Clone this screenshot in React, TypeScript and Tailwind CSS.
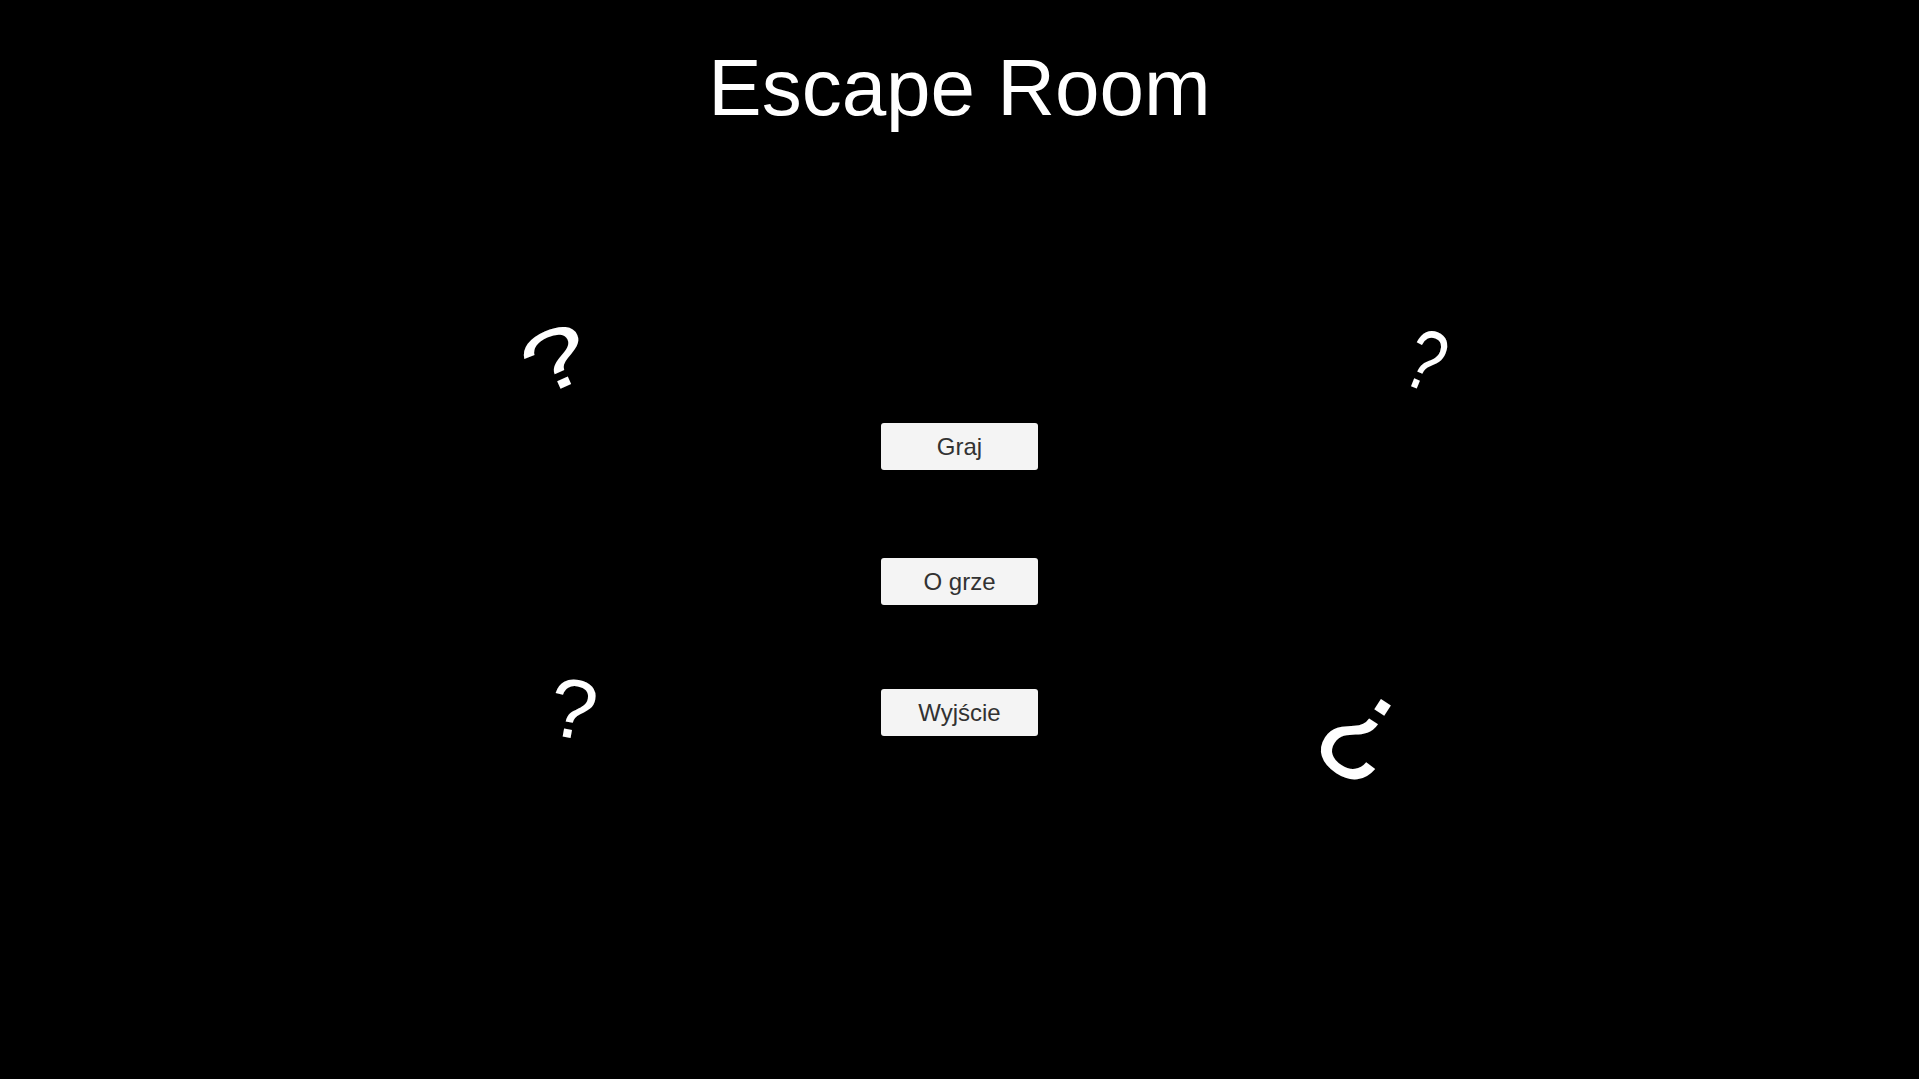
import React from "react";

export default function App() {
  const font = { fontFamily: '"Liberation Sans", Arial, sans-serif' };
  return (
    <div className="relative w-[1919px] h-[1079px] bg-black overflow-hidden text-white" style={font}>
      <div className="flex flex-col items-center">
        <h1 className="pt-[48px] text-[80px] leading-[80px] text-white font-normal">
          Escape Room
        </h1>
        <button className="mt-[295px] w-[157px] h-[47px] rounded-[3px] bg-[#f4f4f4] text-[#323232] text-[24px] leading-none">
          Graj
        </button>
        <button className="mt-[88px] w-[157px] h-[47px] rounded-[3px] bg-[#f4f4f4] text-[#323232] text-[24px] leading-none">
          O grze
        </button>
        <button className="mt-[84px] w-[157px] h-[47px] rounded-[3px] bg-[#f4f4f4] text-[#323232] text-[24px] leading-none">
          Wyjście
        </button>
      </div>

      <span className="absolute left-[506px] top-[309px] w-[100px] h-[100px] flex items-center justify-center text-[84px] leading-none rotate-[-24deg] scale-x-[1.45]">
        ?
      </span>
      <span className="absolute left-[1376px] top-[310px] w-[100px] h-[100px] flex items-center justify-center text-[86px] leading-none rotate-[22deg] scale-x-[0.75]">
        ?
      </span>
      <span className="absolute left-[523px] top-[659px] w-[100px] h-[100px] flex items-center justify-center text-[84px] leading-none rotate-[10deg]">
        ?
      </span>
      <span className="absolute left-[1302px] top-[650px] w-[140px] h-[140px] flex items-center justify-center text-[124px] leading-none rotate-[33deg]">
        ¿
      </span>
    </div>
  );
}
